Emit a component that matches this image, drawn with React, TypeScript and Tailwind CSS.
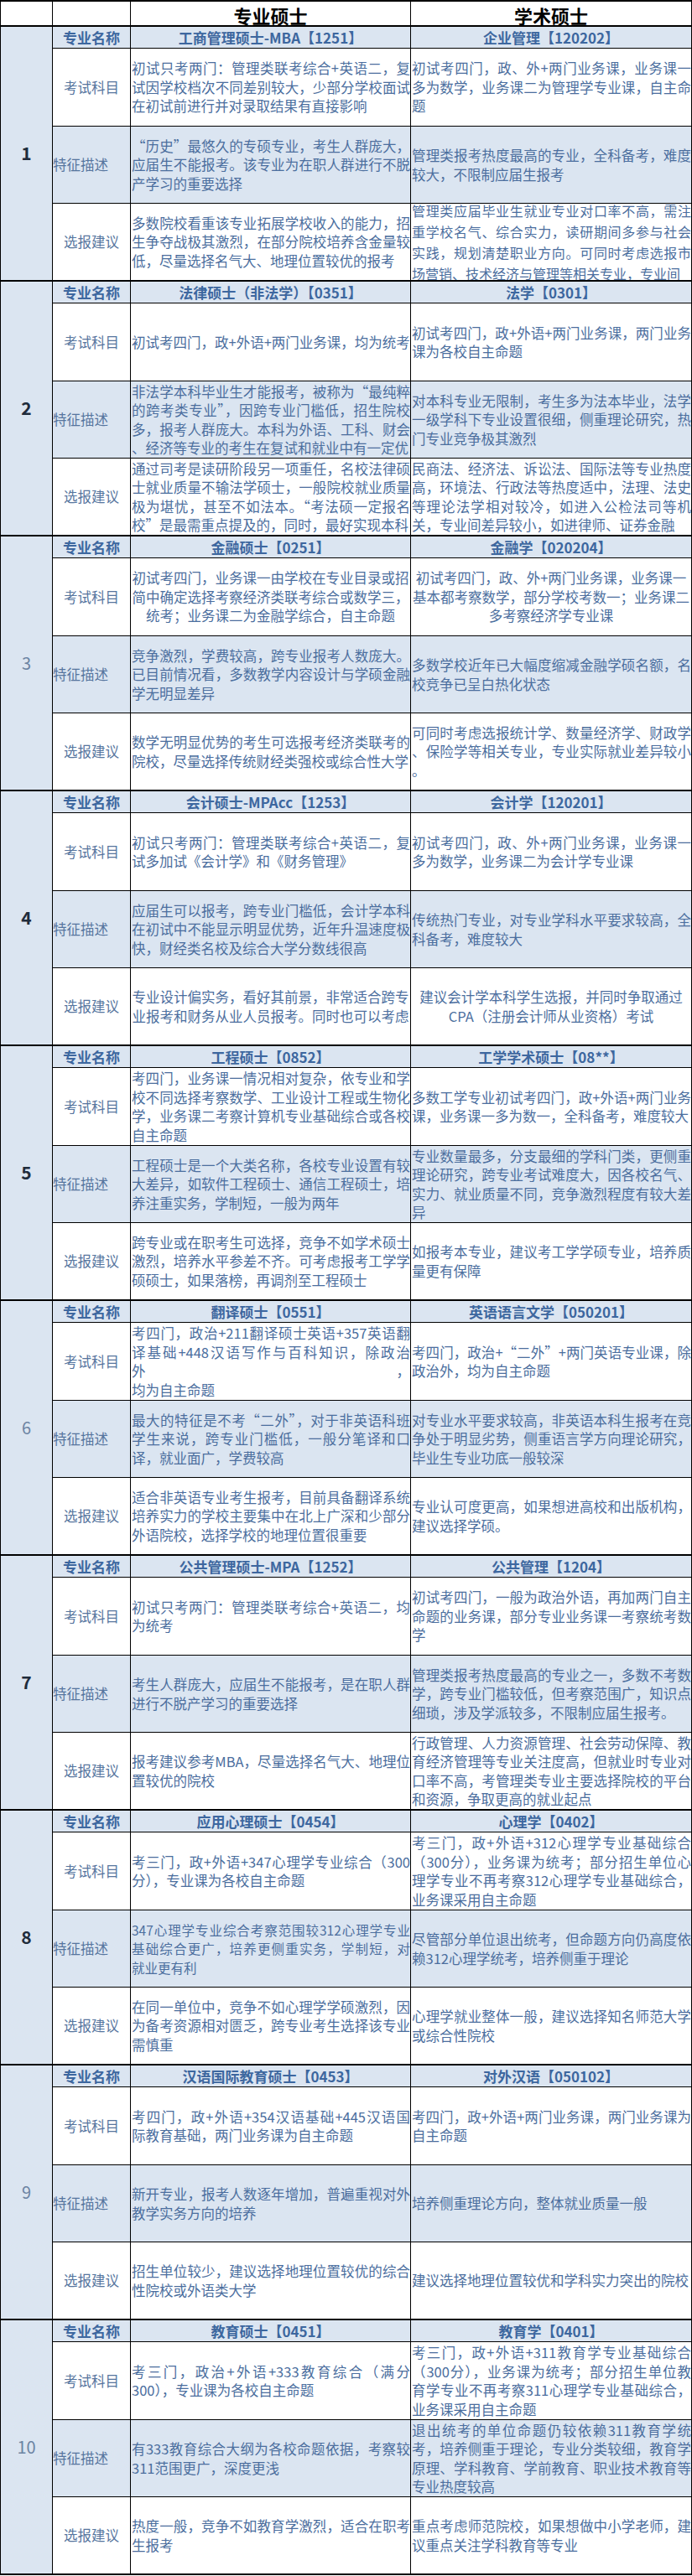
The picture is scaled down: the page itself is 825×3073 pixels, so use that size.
type Cell = { l: string[]; c?: boolean; k?: string }

interface Section {
  n: string
  strong: boolean
  a: string
  b: string
  rows: [Cell, Cell][]
}

const labels = ["考试科目", "特征描述", "选报建议"]

const sections: Section[] = [
  {
    n: "1",
    strong: true,
    a: "工商管理硕士-MBA【1251】",
    b: "企业管理【120202】",
    rows: [
      [
        { l: ["初试只考两门：管理类联考综合+英语二，复", "试因学校档次不同差别较大，少部分学校面试", "在初试前进行并对录取结果有直接影响"] },
        { l: ["初试考四门，政、外+两门业务课，业务课一", "多为数学，业务课二为管理学专业课，自主命", "题"] },
      ],
      [
        { l: ["“历史”最悠久的专硕专业，考生人群庞大，", "应届生不能报考。该专业为在职人群进行不脱", "产学习的重要选择"] },
        { l: ["管理类报考热度最高的专业，全科备考，难度", "较大，不限制应届生报考"] },
      ],
      [
        { l: ["多数院校看重该专业拓展学校收入的能力，招", "生争夺战极其激烈，在部分院校培养含金量较", "低，尽量选择名气大、地理位置较优的报考"] },
        { l: ["管理类应届毕业生就业专业对口率不高，需注", "重学校名气、综合实力，读研期间多参与社会", "实践，规划清楚职业方向。可同时考虑选报市", "场营销、技术经济与管理等相关专业，专业间"], k: "leading-[25px]" },
      ],
    ],
  },
  {
    n: "2",
    strong: true,
    a: "法律硕士（非法学）【0351】",
    b: "法学【0301】",
    rows: [
      [
        { l: ["初试考四门，政+外语+两门业务课，均为统考"] },
        { l: ["初试考四门，政+外语+两门业务课，两门业务", "课为各校自主命题"] },
      ],
      [
        { l: ["非法学本科毕业生才能报考，被称为“最纯粹", "的跨考类专业”，因跨专业门槛低，招生院校", "多，报考人群庞大。本科为外语、工科、财会", "、经济等专业的考生在复试和就业中有一定优"] },
        { l: ["对本科专业无限制，考生多为法本毕业，法学", "一级学科下专业设置很细，侧重理论研究，热", "门专业竞争极其激烈"] },
      ],
      [
        { l: ["通过司考是读研阶段另一项重任，名校法律硕", "士就业质量不输法学硕士，一般院校就业质量", "极为堪忧，甚至不如法本。“考法硕一定报名", "校”是最需重点提及的，同时，最好实现本科"] },
        { l: ["民商法、经济法、诉讼法、国际法等专业热度", "高，环境法、行政法等热度适中，法理、法史", "等理论法学相对较冷，如进入公检法司等机", "关，专业间差异较小，如进律师、证券金融"] },
      ],
    ],
  },
  {
    n: "3",
    strong: false,
    a: "金融硕士【0251】",
    b: "金融学【020204】",
    rows: [
      [
        { l: ["初试考四门，业务课一由学校在专业目录或招", "简中确定选择考察经济类联考综合或数学三，", "统考；业务课二为金融学综合，自主命题"], c: true },
        { l: ["初试考四门，政、外+两门业务课，业务课一", "基本都考察数学，部分学校考数一；业务课二", "多考察经济学专业课"], c: true },
      ],
      [
        { l: ["竞争激烈，学费较高，跨专业报考人数庞大。", "已目前情况看，多数教学内容设计与学硕金融", "学无明显差异"] },
        { l: ["多数学校近年已大幅度缩减金融学硕名额，名", "校竞争已呈白热化状态"] },
      ],
      [
        { l: ["数学无明显优势的考生可选报考经济类联考的", "院校，尽量选择传统财经类强校或综合性大学"] },
        { l: ["可同时考虑选报统计学、数量经济学、财政学", "、保险学等相关专业，专业实际就业差异较小", "。"] },
      ],
    ],
  },
  {
    n: "4",
    strong: true,
    a: "会计硕士-MPAcc【1253】",
    b: "会计学【120201】",
    rows: [
      [
        { l: ["初试只考两门：管理类联考综合+英语二，复", "试多加试《会计学》和《财务管理》"] },
        { l: ["初试考四门，政、外+两门业务课，业务课一", "多为数学，业务课二为会计学专业课"] },
      ],
      [
        { l: ["应届生可以报考，跨专业门槛低，会计学本科", "在初试中不能显示明显优势，近年升温速度极", "快，财经类名校及综合大学分数线很高"] },
        { l: ["传统热门专业，对专业学科水平要求较高，全", "科备考，难度较大"] },
      ],
      [
        { l: ["专业设计偏实务，看好其前景，非常适合跨专", "业报考和财务从业人员报考。同时也可以考虑"], c: true },
        { l: ["建议会计学本科学生选报，并同时争取通过", "CPA（注册会计师从业资格）考试"], c: true },
      ],
    ],
  },
  {
    n: "5",
    strong: true,
    a: "工程硕士【0852】",
    b: "工学学术硕士【08**】",
    rows: [
      [
        { l: ["考四门，业务课一情况相对复杂，依专业和学", "校不同选择考察数学、工业设计工程或生物化", "学，业务课二考察计算机专业基础综合或各校", "自主命题"] },
        { l: ["多数工学专业初试考四门，政+外语+两门业务", "课，业务课一多为数一，全科备考，难度较大"] },
      ],
      [
        { l: ["工程硕士是一个大类名称，各校专业设置有较", "大差异，如软件工程硕士、通信工程硕士，培", "养注重实务，学制短，一般为两年"] },
        { l: ["专业数量最多，分支最细的学科门类，更侧重", "理论研究，跨专业考试难度大，因各校名气、", "实力、就业质量不同，竞争激烈程度有较大差", "异"] },
      ],
      [
        { l: ["跨专业或在职考生可选择，竞争不如学术硕士", "激烈，培养水平参差不齐。可考虑报考工学学", "硕硕士，如果落榜，再调剂至工程硕士"] },
        { l: ["如报考本专业，建议考工学学硕专业，培养质", "量更有保障"] },
      ],
    ],
  },
  {
    n: "6",
    strong: false,
    a: "翻译硕士【0551】",
    b: "英语语言文学【050201】",
    rows: [
      [
        { l: ["考四门，政治+211翻译硕士英语+357英语翻", "译基础+448汉语写作与百科知识，除政治外，", "均为自主命题"] },
        { l: ["考四门，政治+“二外”+两门英语专业课，除", "政治外，均为自主命题"] },
      ],
      [
        { l: ["最大的特征是不考“二外”，对于非英语科班", "学生来说，跨专业门槛低，一般分笔译和口", "译，就业面广，学费较高"] },
        { l: ["对专业水平要求较高，非英语本科生报考在竞", "争处于明显劣势，侧重语言学方向理论研究，", "毕业生专业功底一般较深"] },
      ],
      [
        { l: ["适合非英语专业考生报考，目前具备翻译系统", "培养实力的学校主要集中在北上广深和少部分", "外语院校，选择学校的地理位置很重要"] },
        { l: ["专业认可度更高，如果想进高校和出版机构，", "建议选择学硕。"] },
      ],
    ],
  },
  {
    n: "7",
    strong: true,
    a: "公共管理硕士-MPA【1252】",
    b: "公共管理【1204】",
    rows: [
      [
        { l: ["初试只考两门：管理类联考综合+英语二，均", "为统考"] },
        { l: ["初试考四门，一般为政治外语，再加两门自主", "命题的业务课，部分专业业务课一考察统考数", "学"] },
      ],
      [
        { l: ["考生人群庞大，应届生不能报考，是在职人群", "进行不脱产学习的重要选择"] },
        { l: ["管理类报考热度最高的专业之一，多数不考数", "学，跨专业门槛较低，但考察范围广，知识点", "细琐，涉及学派较多，不限制应届生报考。"] },
      ],
      [
        { l: ["报考建议参考MBA，尽量选择名气大、地理位", "置较优的院校"] },
        { l: ["行政管理、人力资源管理、社会劳动保障、教", "育经济管理等专业关注度高，但就业时专业对", "口率不高，考管理类专业主要选择院校的平台", "和资源，争取更高的就业起点"] },
      ],
    ],
  },
  {
    n: "8",
    strong: true,
    a: "应用心理硕士【0454】",
    b: "心理学【0402】",
    rows: [
      [
        { l: ["考三门，政+外语+347心理学专业综合（300", "分），专业课为各校自主命题"] },
        { l: ["考三门，政+外语+312心理学专业基础综合", "（300分），业务课为统考；部分招生单位心", "理学专业不再考察312心理学专业基础综合，", "业务课采用自主命题"] },
      ],
      [
        { l: ["347心理学专业综合考察范围较312心理学专业", "基础综合更广，培养更侧重实务，学制短，对", "就业更有利"], k: "text-[15.5px]" },
        { l: ["尽管部分单位退出统考，但命题方向仍高度依", "赖312心理学统考，培养侧重于理论"] },
      ],
      [
        { l: ["在同一单位中，竞争不如心理学学硕激烈，因", "为备考资源相对匮乏，跨专业考生选择该专业", "需慎重"] },
        { l: ["心理学就业整体一般，建议选择知名师范大学", "或综合性院校"] },
      ],
    ],
  },
  {
    n: "9",
    strong: false,
    a: "汉语国际教育硕士【0453】",
    b: "对外汉语【050102】",
    rows: [
      [
        { l: ["考四门，政+外语+354汉语基础+445汉语国", "际教育基础，两门业务课为自主命题"] },
        { l: ["考四门，政+外语+两门业务课，两门业务课为", "自主命题"] },
      ],
      [
        { l: ["新开专业，报考人数逐年增加，普遍重视对外", "教学实务方向的培养"] },
        { l: ["培养侧重理论方向，整体就业质量一般"] },
      ],
      [
        { l: ["招生单位较少，建议选择地理位置较优的综合", "性院校或外语类大学"] },
        { l: ["建议选择地理位置较优和学科实力突出的院校"] },
      ],
    ],
  },
  {
    n: "10",
    strong: false,
    a: "教育硕士【0451】",
    b: "教育学【0401】",
    rows: [
      [
        { l: ["考三门，政治+外语+333教育综合（满分", "300），专业课为各校自主命题"] },
        { l: ["考三门，政+外语+311教育学专业基础综合", "（300分），业务课为统考；部分招生单位教", "育学专业不再考察311心理学专业基础综合，", "业务课采用自主命题"] },
      ],
      [
        { l: ["有333教育综合大纲为各校命题依据，考察较", "311范围更广，深度更浅"] },
        { l: ["退出统考的单位命题仍较依赖311教育学统", "考，培养侧重于理论，专业分类较细，教育学", "原理、学科教育、学前教育、职业技术教育等", "专业热度较高"] },
      ],
      [
        { l: ["热度一般，竞争不如教育学激烈，适合在职考", "生报考"] },
        { l: ["重点考虑师范院校，如果想做中小学老师，建", "议重点关注学科教育等专业"] },
      ],
    ],
  },
]

function TextCell({ cell, tint, last }: { cell: Cell; tint: boolean; last: boolean }) {
  return (
    <div
      className={`flex flex-col justify-center overflow-hidden border-r border-black leading-[22.5px] text-[#4b6e9e] ${
        last ? "" : "border-b"
      } ${tint ? "bg-[#dbe5f1]" : "bg-white"} ${cell.c ? "items-center text-center" : "pl-px"} ${cell.k ?? "text-[16.5px]"}`}
    >
      {cell.l.map((line, i) => (
        <div
          key={i}
          className={
            !cell.c && i < cell.l.length - 1
              ? "w-full text-justify [text-align-last:justify]"
              : ""
          }
        >
          {line}
        </div>
      ))}
    </div>
  )
}

function Block({ s }: { s: Section }) {
  return (
    <section className="grid grid-cols-[62px_93px_334px_335px] grid-rows-[26px_93px_92px_91px] border-b-2 border-black">
      <div
        className={`row-span-4 flex items-center justify-center border-r border-black bg-[#dbe5f1] ${
          s.strong
            ? "text-[21px] font-bold text-[#1f2c3c]"
            : "text-[20px] font-normal text-[#6c84a3]"
        }`}
      >
        {s.n}
      </div>
      <div className="flex items-center justify-center border-r border-b border-black bg-[#dbe5f1] text-[17px] font-bold text-[#3d679f]">
        专业名称
      </div>
      <div className="flex items-center justify-center border-r border-b border-black bg-[#dbe5f1] text-[17px] font-bold text-[#3d679f]">
        {s.a}
      </div>
      <div className="flex items-center justify-center border-r border-b border-black bg-[#dbe5f1] text-[17px] font-bold text-[#3d679f]">
        {s.b}
      </div>
      {s.rows.map((row, r) => {
        const tint = r === 1
        const last = r === 2
        return [
          <div
            key={`l${r}`}
            className={`flex items-center border-r border-black text-[16.5px] text-[#56759e] ${
              last ? "" : "border-b"
            } ${tint ? "justify-start bg-[#dbe5f1]" : "justify-center bg-white"}`}
          >
            {labels[r]}
          </div>,
          <TextCell key={`a${r}`} cell={row[0]} tint={tint} last={last} />,
          <TextCell key={`b${r}`} cell={row[1]} tint={tint} last={last} />,
        ]
      })}
    </section>
  )
}

export default function App() {
  return (
    <div className="min-h-[3073px] bg-white font-['Noto_Sans_CJK_SC',sans-serif]">
      <div className="w-[825px] border-t-2 border-l border-black">
        <div className="grid h-[30px] grid-cols-[62px_93px_334px_335px] border-b-2 border-black text-[22px] font-bold text-black">
          <div className="border-r border-black" />
          <div className="border-r border-black" />
          <div className="flex items-center justify-center border-r border-black">专业硕士</div>
          <div className="flex items-center justify-center border-r border-black">学术硕士</div>
        </div>
        {sections.map((s) => (
          <Block key={s.n} s={s} />
        ))}
      </div>
    </div>
  )
}
